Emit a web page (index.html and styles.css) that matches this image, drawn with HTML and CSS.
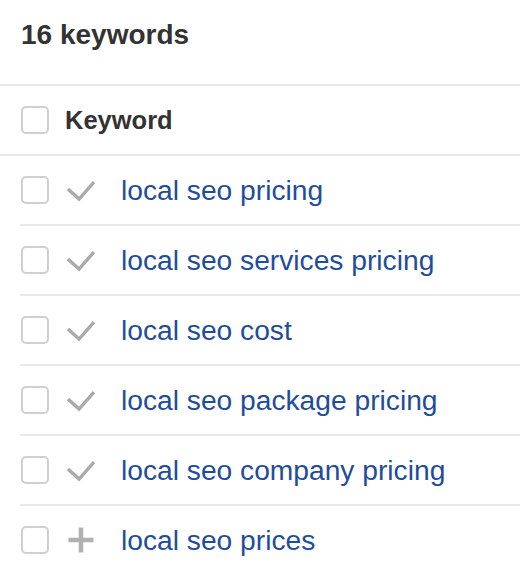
FILE: index.html
```html
<!DOCTYPE html>
<html>
<head>
<meta charset="utf-8">
<link rel="stylesheet" href="styles.css">
</head>
<body>
<div class="panel">
  <div class="title">16 keywords</div>
  <div class="head-row">
    <span class="box"></span>
    <span class="head-label">Keyword</span>
  </div>
  <div class="rows">
    <div class="row"><span class="box"></span><svg class="icon" viewBox="0 0 28 28"><path d="M1 13 L12 23 L27 6" fill="none" stroke="#aaa" stroke-width="3.4"/></svg><a class="kw">local seo pricing</a></div>
    <div class="row"><span class="box"></span><svg class="icon" viewBox="0 0 28 28"><path d="M1 13 L12 23 L27 6" fill="none" stroke="#aaa" stroke-width="3.4"/></svg><a class="kw">local seo services pricing</a></div>
    <div class="row"><span class="box"></span><svg class="icon" viewBox="0 0 28 28"><path d="M1 13 L12 23 L27 6" fill="none" stroke="#aaa" stroke-width="3.4"/></svg><a class="kw">local seo cost</a></div>
    <div class="row"><span class="box"></span><svg class="icon" viewBox="0 0 28 28"><path d="M1 13 L12 23 L27 6" fill="none" stroke="#aaa" stroke-width="3.4"/></svg><a class="kw">local seo package pricing</a></div>
    <div class="row"><span class="box"></span><svg class="icon" viewBox="0 0 28 28"><path d="M1 13 L12 23 L27 6" fill="none" stroke="#aaa" stroke-width="3.4"/></svg><a class="kw">local seo company pricing</a></div>
    <div class="row last"><span class="box"></span><svg class="icon" viewBox="0 0 28 28"><path d="M14 1.5 V26.5 M1.5 14 H26.5" fill="none" stroke="#b0b0b0" stroke-width="4.5"/></svg><a class="kw">local seo prices</a></div>
  </div>
</div>
</body>
</html>
```
FILE: styles.css
```css
html, body {
  margin: 0;
  padding: 0;
  background: #fff;
}
body {
  font-family: "Liberation Sans", Arial, Helvetica, sans-serif;
  color: #333;
  overflow: hidden;
}
.panel {
  width: 520px;
}
.title {
  height: 86px;
  box-sizing: border-box;
  padding: 20px 0 0 21px;
  font-size: 28px;
  font-weight: bold;
  line-height: 30px;
  border-bottom: 2px solid #e8e8e8;
}
.head-row {
  height: 68px;
  display: flex;
  align-items: center;
  padding-left: 21px;
  border-bottom: 2px solid #e8e8e8;
}
.head-label {
  margin-left: 16px;
  font-size: 25.5px;
  font-weight: bold;
  color: #333;
}
.box {
  width: 28px;
  height: 28px;
  box-sizing: border-box;
  border: 2px solid #cfcfcf;
  border-radius: 5px;
  flex: none;
}
.rows {
  padding-left: 20px;
}
.row {
  height: 68px;
  display: flex;
  align-items: center;
  padding-left: 1px;
  border-bottom: 2px solid #e8e8e8;
}
.row.last {
  border-bottom: none;
}
.icon {
  width: 28px;
  height: 28px;
  margin-left: 18px;
  flex: none;
}
.kw {
  margin-left: 26px;
  font-size: 28.2px;
  color: #1f4d9c;
  text-decoration: none;
}
```
